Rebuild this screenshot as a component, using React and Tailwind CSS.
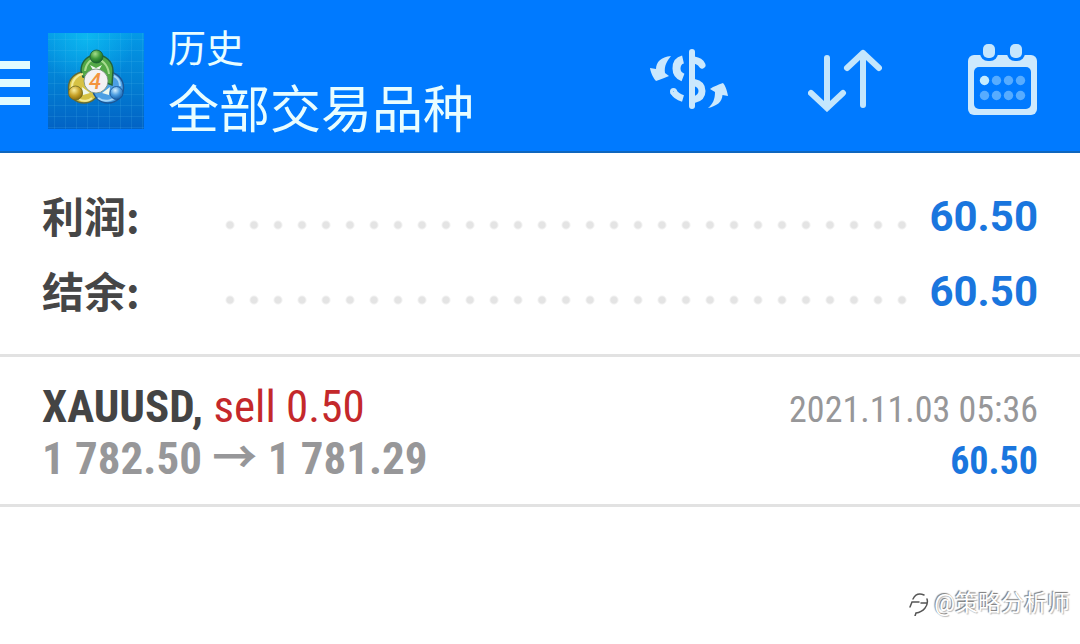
import React from 'react';

const summary = [
  { label: '利润:', value: '60.50' },
  { label: '结余:', value: '60.50' },
];

const deals = [
  {
    symbol: 'XAUUSD',
    action: 'sell 0.50',
    open: '1 782.50',
    close: '1 781.29',
    time: '2021.11.03 05:36',
    profit: '60.50',
  },
];

function AppLogo() {
  return (
    <svg viewBox="0 0 96 96" className="size-24 shrink-0" aria-hidden="true">
      <defs>
        <linearGradient id="sky" x1="0" y1="0" x2="0" y2="1">
          <stop offset="0" stopColor="#0499e6" />
          <stop offset="0.5" stopColor="#0280d4" />
          <stop offset="1" stopColor="#0262c4" />
        </linearGradient>
        <radialGradient id="glow" cx="0.4" cy="0.05" r="0.5">
          <stop offset="0" stopColor="#10c4f4" stopOpacity="0.7" />
          <stop offset="1" stopColor="#10c4f4" stopOpacity="0" />
        </radialGradient>
        <pattern id="mesh" width="11" height="11" patternUnits="userSpaceOnUse">
          <path d="M6.500 0V11M0 6.500H11" stroke="#5cc8f5" strokeOpacity="0.14" />
        </pattern>
        <radialGradient id="greenBall" cx="0.4" cy="0.3" r="0.75">
          <stop offset="0" stopColor="#a5dd8c" />
          <stop offset="0.5" stopColor="#3f9a3c" />
          <stop offset="1" stopColor="#12601f" />
        </radialGradient>
        <radialGradient id="goldBall" cx="0.4" cy="0.3" r="0.75">
          <stop offset="0" stopColor="#fbf0a0" />
          <stop offset="0.5" stopColor="#c9a42a" />
          <stop offset="1" stopColor="#80650c" />
        </radialGradient>
        <radialGradient id="blueBall" cx="0.4" cy="0.3" r="0.75">
          <stop offset="0" stopColor="#d2efff" />
          <stop offset="0.5" stopColor="#4a9ce0" />
          <stop offset="1" stopColor="#10569f" />
        </radialGradient>
      </defs>
      <rect width="96" height="96" fill="url(#sky)" />
      <rect width="96" height="96" fill="url(#glow)" />
      <rect width="96" height="96" fill="url(#mesh)" />
      <circle cx="36" cy="54.500" r="15.500" fill="#d6c244" stroke="#5f6a38" strokeWidth="1.500" />
      <circle cx="60" cy="54.500" r="15.500" fill="#4c9fe4" stroke="#1b5797" strokeWidth="1.500" />
      <path d="M33 38C33 28 40 22 48.500 22S65 28 65 38L64 52L48 46L35 44Z" fill="#53a847" stroke="#23633b" strokeWidth="1.500" />
      <path d="M37 38C38 30 43 26 48 26S60 31 61 41" fill="none" stroke="#a8dc90" strokeWidth="2" />
      <path d="M24 54C24 47 29 42 35 41M31 66C35 69 41 68 44 65" fill="none" stroke="#f4eb96" strokeWidth="2" />
      <path d="M50 65C57 70 68 68 72 58M66 43C70 45 72 49 72 53" fill="none" stroke="#a4d6f9" strokeWidth="2" />
      <path d="M42 32L48 35L54 32L51 37H45ZM34 54L35 62L42 60ZM62 54L61 62L54 60Z" fill="#eef8ee" />
      <circle cx="48.500" cy="23.500" r="6.500" fill="url(#greenBall)" stroke="#1d5c37" strokeWidth="0.800" />
      <circle cx="27.500" cy="60" r="7" fill="url(#goldBall)" stroke="#6c6a28" strokeWidth="0.800" />
      <circle cx="68.500" cy="60" r="6.500" fill="url(#blueBall)" stroke="#174f93" strokeWidth="0.800" />
      <circle cx="48" cy="48" r="12" fill="#f3f1f3" stroke="#6f8a7a" strokeWidth="0.800" />
      <text x="47" y="56" textAnchor="middle" fontSize="22" fontStyle="italic" fontWeight="500" fill="#f3943f">4</text>
    </svg>
  );
}

function CurrencyIcon() {
  return (
    <svg viewBox="0 0 80 64" className="h-16 w-20" fill="none" aria-hidden="true">
      <g stroke="#cbe8fd">
        <path d="M42 4V58" strokeWidth="6" strokeLinecap="round" />
        <path d="M33 11.500Q26.500 13 26.500 20.500Q26.500 27 33 29.500" strokeWidth="8" />
        <path d="M44 12Q50 13 52 17" strokeWidth="7" strokeLinecap="round" />
        <path d="M44 34.500Q52 36 52 43T44 51.500" strokeWidth="7" />
        <path d="M23.500 43.500Q26 48.500 33 50.500" strokeWidth="7" />
        <circle cx="23.500" cy="43.500" r="2" strokeWidth="3" />
      </g>
      <path d="M21 8C11 9 6 14 6 21L0 20C1 26 4 31 6 33C11 31 15 30 19 28L15 25C14 18 17 13 21 8Z" fill="#cbe8fd" />
      <path d="M58 60C67 58 72 54 72.500 47L78 48C77 42 75 37 73 35C68 37 64 38 60 41L65 44C65 51 63 56 58 60Z" fill="#cbe8fd" />
    </svg>
  );
}

function SortIcon() {
  return (
    <svg viewBox="0 0 74 64" className="h-16 w-[74px]" fill="none" stroke="#c3e6fd" strokeWidth="6" strokeLinecap="round" strokeLinejoin="round" aria-hidden="true">
      <path d="M19 10V60M3 45L19 60L35 45" strokeLinejoin="miter" />
      <path d="M55 57V5M39 20L55 5L71 20" />
    </svg>
  );
}

function CalendarIcon() {
  return (
    <svg viewBox="0 0 70 72" className="h-[72px] w-[70px]" aria-hidden="true">
      <rect y="11" width="69" height="60" rx="6" fill="#cde9fd" />
      <rect x="12" y="-4" width="18" height="21" rx="8" fill="#007aff" />
      <rect x="39" y="-4" width="18" height="21" rx="8" fill="#007aff" />
      <rect x="15" width="12" height="14" rx="5" fill="#c5e6fd" />
      <rect x="42" width="12" height="14" rx="5" fill="#c5e6fd" />
      <rect x="6" y="23" width="57" height="42" rx="5" fill="#007aff" />
      {[36, 51].map((y) =>
        [16, 28, 40, 52].map((x) => (
          <circle key={`${x}-${y}`} cx={x + 0.5} cy={y + 0.5} r="4.700" fill={x === 16 && y === 36 ? '#c5ecff' : '#57acff'} />
        ))
      )}
    </svg>
  );
}

function Header() {
  return (
    <header className="flex items-center justify-between border-b-2 border-[#0f66bd] bg-[#007aff] pt-[11px] pr-[42px]">
      <div className="flex items-center">
        <button className="flex w-12 flex-col gap-[10px] pt-1" aria-label="Menu">
          <span className="h-2 w-[30px] bg-[#e0fbff]" />
          <span className="h-2 w-[30px] bg-[#e0fbff]" />
          <span className="h-2 w-[30px] bg-[#e0fbff]" />
        </button>
        <AppLogo />
        <div className="pt-[9px] pb-[7px] pl-6 text-[#e8fdff]">
          <p className="text-[38px] leading-[58px]">历史</p>
          <h1 className="text-[51px] leading-[66px]">全部交易品种</h1>
        </div>
      </div>
      <div className="flex items-center gap-[78px] pb-0.5">
        <button aria-label="Symbols"><CurrencyIcon /></button>
        <button aria-label="Sort"><SortIcon /></button>
        <button className="ml-2" aria-label="Period"><CalendarIcon /></button>
      </div>
    </header>
  );
}

function SummaryRow({ label, value }) {
  return (
    <div className="flex h-[75px] items-center text-[42px] font-bold">
      <dt className="w-44 pb-1 font-['Noto_Sans_CJK_SC',sans-serif] text-[#464646]">{label}</dt>
      <dd className="flex flex-1 items-center gap-4 text-[#1a76de]">
        <span className="mt-4 h-6 flex-1 bg-[radial-gradient(circle,#e4e4e4_3px,transparent_5px)] bg-[length:24px_24px]" />
        {value}
      </dd>
    </div>
  );
}

function Deal({ deal }) {
  return (
    <li className="flex justify-between border-b-3 border-[#e2e2e2] px-[42px] pt-6 pb-[17px] font-['Roboto_Condensed','Noto_Sans_CJK_SC',sans-serif]">
      <div className="text-[45px] leading-[52px] font-bold">
        <p className="text-[#444]">
          {deal.symbol}, <span className="font-normal text-[#c4282b]">{deal.action}</span>
        </p>
        <p className="text-[#979799]">
          {deal.open} → {deal.close}
        </p>
      </div>
      <div className="pt-1 text-right leading-[51px]">
        <p className="text-[36px] text-[#979799]">{deal.time}</p>
        <p className="text-[38px] font-bold text-[#1a76de]">{deal.profit}</p>
      </div>
    </li>
  );
}

export default function App() {
  return (
    <div className="flex min-h-screen flex-col bg-white font-[Roboto,'Noto_Sans_CJK_SC',sans-serif]">
      <Header />
      <main className="flex-1">
        <dl className="border-b-3 border-[#e2e2e2] px-[42px] pt-[26px] pb-[25px]">
          {summary.map((row) => (
            <SummaryRow key={row.label} label={row.label} value={row.value} />
          ))}
        </dl>
        <ul>
          {deals.map((deal) => (
            <Deal key={deal.time} deal={deal} />
          ))}
        </ul>
      </main>
      <footer className="flex items-center justify-end gap-1 px-2.5 pb-[22px] text-[23px] leading-9 text-white [text-shadow:-1px_-1px_1px_#777,1px_1px_1px_#bbb]">
        <svg viewBox="0 0 22 24" className="h-6 w-[22px]" fill="none" strokeLinecap="round" aria-hidden="true">
          <path d="M2 15L4 10H11M5 7C7 3 11 1 16 3M13 11H19M19 7C21 14 15 20 8 21L7 24" stroke="#555" strokeWidth="1.500" />
        </svg>
        @策略分析师
      </footer>
    </div>
  );
}
